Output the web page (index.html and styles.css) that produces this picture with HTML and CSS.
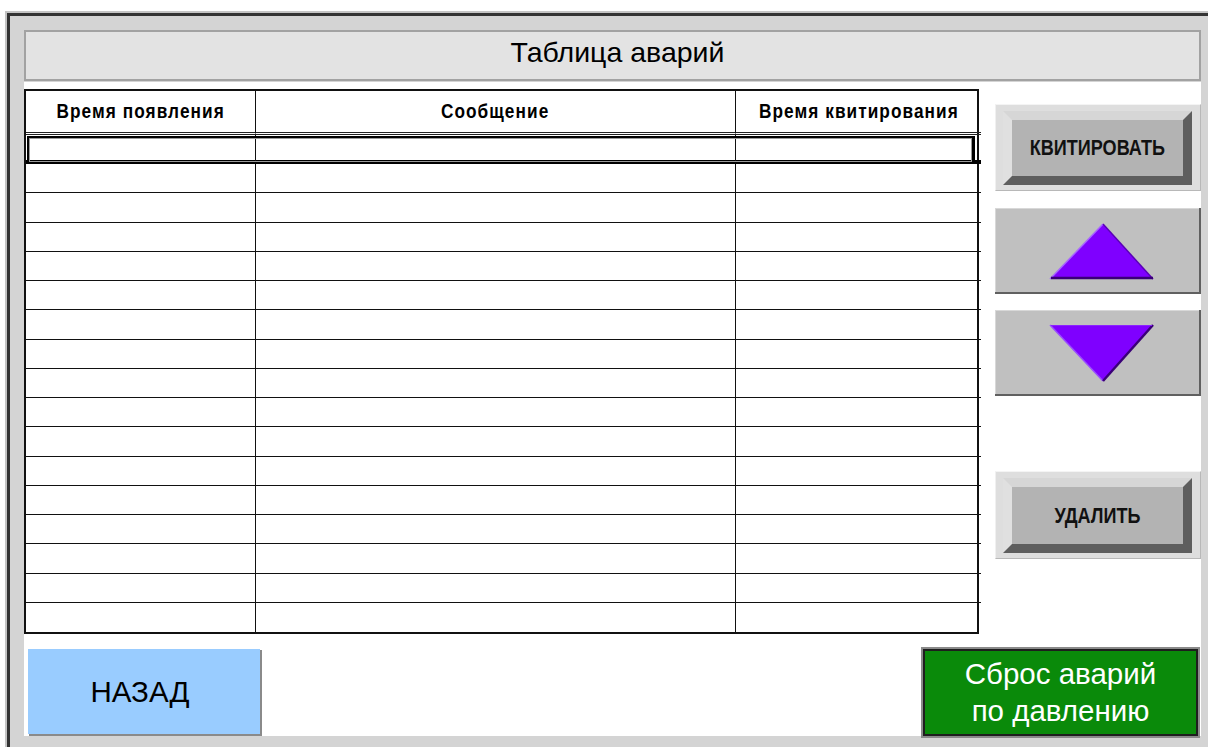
FILE: index.html
```html
<!DOCTYPE html>
<html lang="ru">
<head>
<meta charset="utf-8">
<title>Таблица аварий</title>
<link rel="stylesheet" href="styles.css">
</head>
<body>
<div class="window">
  <div class="panel">
    <div class="title">Таблица аварий</div>
    <div class="content">
      <div class="alarm-table">
        <div class="grid">
          <div class="th"><span class="narrow">Время появления</span></div>
          <div class="th"><span class="narrow">Сообщение</span></div>
          <div class="th"><span class="narrow">Время квитирования</span></div>
          <div class="td first"></div><div class="td first"></div><div class="td first"></div>
          <div class="td"></div><div class="td"></div><div class="td"></div>
          <div class="td"></div><div class="td"></div><div class="td"></div>
          <div class="td"></div><div class="td"></div><div class="td"></div>
          <div class="td"></div><div class="td"></div><div class="td"></div>
          <div class="td"></div><div class="td"></div><div class="td"></div>
          <div class="td"></div><div class="td"></div><div class="td"></div>
          <div class="td"></div><div class="td"></div><div class="td"></div>
          <div class="td"></div><div class="td"></div><div class="td"></div>
          <div class="td"></div><div class="td"></div><div class="td"></div>
          <div class="td"></div><div class="td"></div><div class="td"></div>
          <div class="td"></div><div class="td"></div><div class="td"></div>
          <div class="td"></div><div class="td"></div><div class="td"></div>
          <div class="td"></div><div class="td"></div><div class="td"></div>
          <div class="td"></div><div class="td"></div><div class="td"></div>
          <div class="td"></div><div class="td"></div><div class="td"></div>
          <div class="td last"></div><div class="td last"></div><div class="td last"></div>
        </div>
        <div class="focus-row"></div>
      </div>

      <div class="side">
        <div class="bevel-frame">
          <button class="bevel-btn"><span class="narrow">КВИТИРОВАТЬ</span></button>
        </div>
        <button class="arrow-btn" aria-label="Вверх">
          <svg width="206" height="86" viewBox="0 0 206 86">
            <polygon points="108,16 158,71 55,71" fill="#7f00ff"/>
            <polyline points="55,71 108,16" fill="none" stroke="#a766ff" stroke-width="1.5"/>
            <polyline points="108,16 158,71" fill="none" stroke="#5a00b8" stroke-width="1.5"/>
            <line x1="56" y1="70" x2="158" y2="70" stroke="#3a0078" stroke-width="2.5"/>
          </svg>
        </button>
        <button class="arrow-btn" aria-label="Вниз">
          <svg width="206" height="86" viewBox="0 0 206 86">
            <polygon points="55,15 158,15 108,71" fill="#7f00ff"/>
            <polyline points="55,15 108,71" fill="none" stroke="#9a4dff" stroke-width="1.5"/>
            <polyline points="158,15 108,71" fill="none" stroke="#3a0078" stroke-width="2.5"/>
            <line x1="56" y1="15.5" x2="157" y2="15.5" stroke="#8c22ff" stroke-width="1"/>
          </svg>
        </button>
        <div class="bevel-frame delete">
          <button class="bevel-btn"><span class="narrow">УДАЛИТЬ</span></button>
        </div>
      </div>

      <div class="bottom-bar">
        <button class="back-btn">НАЗАД</button>
        <button class="reset-btn">Сброс аварий<br>по давлению</button>
      </div>
    </div>
  </div>
</div>
</body>
</html>
```

FILE: styles.css
```css
html, body {
  margin: 0;
  padding: 0;
  background: #ffffff;
  overflow: hidden;
}

body {
  width: 1208px;
  height: 747px;
  font-family: "Liberation Sans", Arial, sans-serif;
}

/* Outer window edge: light outline, then dark inner line */
.window {
  margin: 11px 0 0 5px;
  border-top: 2px solid #c4c4c4;
  border-left: 2px solid #c4c4c4;
  height: 734px;
  width: 1230px;
}

.panel {
  border-top: 3px solid #333333;
  border-left: 3px solid #333333;
  background: #d4d4d4;
  height: 100%;
  box-sizing: border-box;
  padding: 14px 0 0 14px;
}

.title {
  width: 1177px;
  height: 51px;
  box-sizing: border-box;
  border: 2px solid #a2a2a2;
  background: #e3e3e3;
  font-size: 28.5px;
  text-align: center;
  line-height: 41px;
  padding-left: 10px;
  color: #000;
}

.content {
  margin-top: 1px;
  width: 1177px;
  height: 654px;
  background: #ffffff;
  display: grid;
  grid-template-columns: 955px 206px;
  grid-template-rows: 552px 102px;
  column-gap: 16px;
}

/* Condensed bold lettering used by the table header and grey buttons */
.narrow {
  display: inline-block;
  font-family: "Liberation Sans", Arial, sans-serif;
  font-weight: bold;
  transform: scaleX(0.82);
  white-space: nowrap;
}

/* ---- Alarm table ---- */
.alarm-table {
  position: relative;
  margin-top: 7px;
  height: 545px;
}

.grid {
  display: grid;
  grid-template-columns: 230px 480px 245px;
  grid-template-rows: 44px repeat(17, 1fr);
  height: 100%;
  box-sizing: border-box;
  border: 2px solid #111;
}

.th, .td {
  border-right: 1.5px solid #111;
  border-bottom: 1.5px solid #111;
}

.th:nth-child(3n), .td:nth-child(3n) {
  border-right: none;
}

.td.last {
  border-bottom: none;
}

.td.first {
  border-bottom: 4px solid #000;
}

.th {
  font-size: 21px;
  letter-spacing: 1.3px;
  display: flex;
  align-items: center;
  justify-content: center;
  color: #000;
  border-bottom: 3px double #222;
  padding-bottom: 1px;
}

/* Focus rectangle drawn around the selected first row */
.focus-row {
  position: absolute;
  left: 3px;
  right: 4px;
  top: 47px;
  height: 24px;
  border: 2px solid #000;
  border-right-width: 3px;
  box-shadow: inset 1px 1px 0 #9a9a9a, inset -1px -1px 0 #9a9a9a;
  pointer-events: none;
}

/* ---- Right-hand controls ---- */
.side {
  display: flex;
  flex-direction: column;
  padding-top: 22px;
  gap: 17px;
}

.bevel-frame {
  height: 87px;
  box-sizing: border-box;
  padding: 6px 8px 5px 7px;
  background: #dedede;
  border-top: 1px solid #f4f4f4;
  border-left: 1px solid #f0f0f0;
  border-right: 1px solid #b8b8b8;
  border-bottom: 1px solid #b8b8b8;
}

.bevel-frame.delete {
  margin-top: 58px;
  height: 88px;
}

.bevel-btn {
  width: 100%;
  height: 100%;
  box-sizing: border-box;
  margin: 0;
  padding: 0;
  background: #b3b3b3;
  border-style: solid;
  border-width: 9px;
  border-color: #d6d6d6 #5e5e5e #5e5e5e #e0e0e0;
  font-size: 22px;
  color: #111;
  font-family: "Liberation Sans", Arial, sans-serif;
}

.arrow-btn {
  margin: 0;
  padding: 0;
  width: 206px;
  height: 86px;
  display: block;
  background: #c0c0c0;
  border: none;
  box-shadow: inset -2px -2px 0 #606060, inset 1px 1px 0 #d8d8d8;
}

.arrow-btn svg {
  display: block;
}

.arrow-btn + .arrow-btn {
  margin-top: -1px;
}

/* ---- Bottom buttons ---- */
.bottom-bar {
  grid-column: 1 / 3;
  display: flex;
  justify-content: space-between;
  align-items: flex-end;
  padding: 0 3px 0 3px;
}

.back-btn {
  width: 233px;
  height: 86px;
  margin: 0 0 2px 0;
  padding: 0 8px 0 0;
  background: #99ccff;
  border: none;
  border-top: 1px solid #ffffff;
  border-left: 1px solid #ffffff;
  box-shadow: 2px 2px 0 #8a8a8a;
  font-family: "Liberation Sans", Arial, sans-serif;
  font-size: 29.5px;
  color: #000;
}

.reset-btn {
  width: 275px;
  height: 87px;
  margin: 0;
  padding: 0 0 2px 0;
  box-sizing: border-box;
  background: #0a8a0a;
  border: 2px solid #1e1e1e;
  outline: 2px solid #8a8a8a;
  outline-offset: 0;
  font-family: "Liberation Sans", Arial, sans-serif;
  font-size: 29.5px;
  line-height: 37px;
  color: #ffffff;
}
```
